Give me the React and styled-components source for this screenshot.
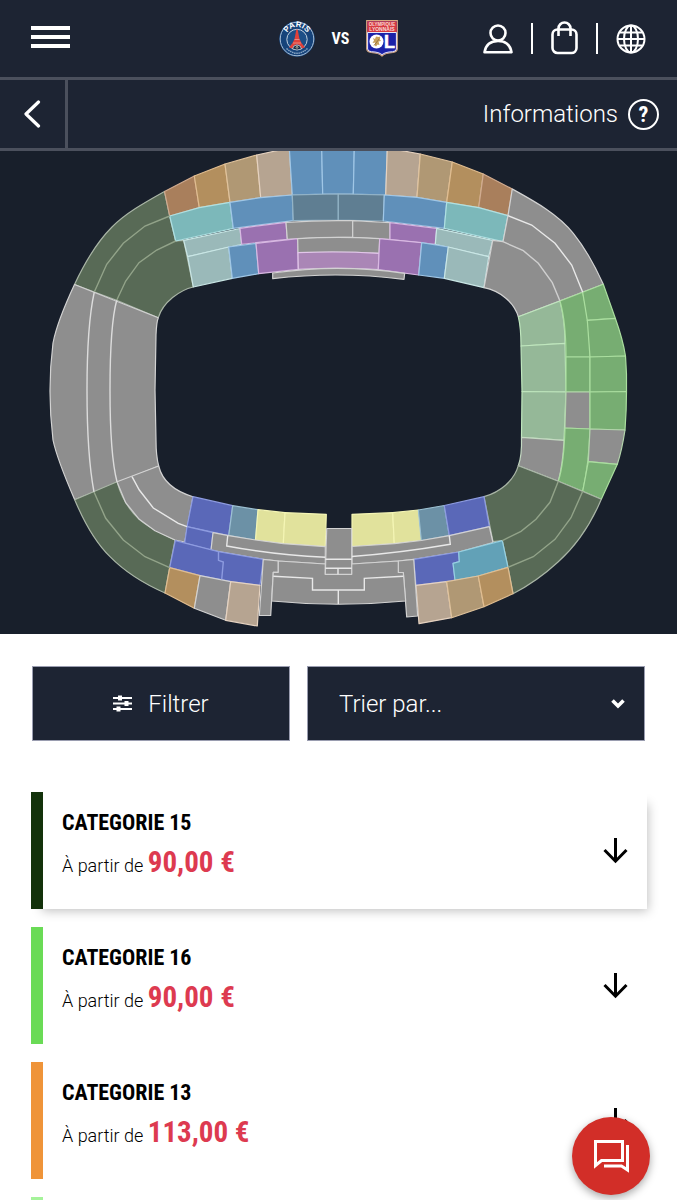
import React from 'react';
import styled, { createGlobalStyle } from 'styled-components';

const GlobalStyle = createGlobalStyle`
  *, *::before, *::after {
    box-sizing: border-box;
  }

  body {
    margin: 0;
    background: #fff;
    color: #000;
    font-family: Roboto, "Liberation Sans", sans-serif;
    font-weight: 300;
  }

  button, select {
    margin: 0;
    padding: 0;
    border: 0;
    border-radius: 0;
    background: none;
    color: inherit;
    font: inherit;
    cursor: pointer;
  }

  a {
    color: inherit;
    text-decoration: none;
  }

  svg {
    display: block;
  }
`;

const condensed = '"Roboto Condensed", "Liberation Sans Narrow", "Open Sans Condensed", sans-serif';

const TopBar = styled.header`
  display: grid;
  grid-template-columns: 1fr auto 1fr;
  align-items: center;
  height: 80px;
  padding: 0 31px;
  background: #1d2433;
  border-bottom: 3px solid #4b505d;
  color: #fff;
`;

const MenuButton = styled.button`
  display: flex;
  flex-direction: column;
  justify-content: space-between;
  width: 39px;
  height: 25px;
  padding-bottom: 3px;
`;

const MenuLine = styled.span`
  height: 4px;
  background: #fff;
`;

const Match = styled.div`
  display: flex;
  align-items: center;
  gap: 17px;
`;

const Versus = styled.span`
  font-family: ${condensed};
  font-size: 16px;
  font-weight: 700;
`;

const TopActions = styled.nav`
  display: flex;
  justify-content: flex-end;
  align-items: center;
  gap: 18px;
`;

const Separator = styled.span`
  width: 2px;
  height: 31px;
  background: #fff;
`;

const InfoBar = styled.div`
  display: flex;
  justify-content: space-between;
  height: 71px;
  background: #1d2433;
  border-bottom: 3px solid #4b505d;
  color: #fff;
`;

const BackButton = styled.button`
  display: flex;
  align-items: center;
  justify-content: center;
  width: 68px;
  border-right: 3px solid #4b505d;
`;

const InfoLink = styled.a`
  display: flex;
  align-items: center;
  gap: 10px;
  padding-right: 18px;
  font-size: 24px;
`;

const InfoMark = styled.span`
  display: flex;
  align-items: center;
  justify-content: center;
  width: 31px;
  height: 31px;
  border: 2px solid #fff;
  border-radius: 50%;
  font-family: ${condensed};
  font-size: 22px;
  font-weight: 700;
`;

const MapArea = styled.section`
  background: #181f2b;

  svg {
    width: 100%;
    height: auto;
  }
`;

const Toolbar = styled.div`
  display: grid;
  grid-template-columns: 258fr 338fr;
  gap: 17px;
  padding: 32px 32px 51px;
`;

const FilterButton = styled.button`
  display: flex;
  align-items: center;
  justify-content: center;
  gap: 16px;
  height: 75px;
  background: #1d2433;
  border: 1px solid #9a9db0;
  color: #fff;
  font-size: 24px;
`;

const SortField = styled.label`
  position: relative;
  display: block;
`;

const SortSelect = styled.select`
  appearance: none;
  width: 100%;
  height: 75px;
  padding: 0 31px;
  background: #1d2433;
  border: 1px solid #9a9db0;
  color: #fff;
  font-size: 24px;
`;

const SortArrow = styled.svg`
  position: absolute;
  top: 33px;
  right: 20px;
  pointer-events: none;
`;

const List = styled.ul`
  display: flex;
  flex-direction: column;
  gap: 18px;
  margin: 0;
  padding: 0 30px 32px 31px;
  list-style: none;
`;

const Card = styled.li`
  display: flex;
  align-items: center;
  justify-content: space-between;
  min-height: 117px;
  padding-right: 19px;
  border-left: 12px solid ${({ $color }) => $color};
  box-shadow: ${({ $raised }) => ($raised ? '6px 7px 10px -5px rgba(0, 0, 0, 0.25)' : 'none')};
`;

const CardText = styled.div`
  padding: 0 0 9px 19px;
`;

const CardTitle = styled.h2`
  margin: 0;
  font-family: ${condensed};
  font-size: 22px;
  font-weight: 700;
  line-height: 36px;
`;

const CardPrice = styled.p`
  margin: 0;
  font-size: 18px;
  line-height: 42px;
`;

const Price = styled.strong`
  color: #dd3a50;
  font-family: ${condensed};
  font-size: 29px;
  font-weight: 700;
`;

const ChatButton = styled.button`
  position: fixed;
  right: 27px;
  bottom: 5px;
  display: flex;
  align-items: center;
  justify-content: center;
  width: 78px;
  height: 78px;
  border-radius: 50%;
  background: #d22e28;
  box-shadow: 0 3px 8px rgba(0, 0, 0, 0.35);
`;

const C = {
  grey: '#8e8e8e',
  forest: '#586a56',
  brown: '#a97f5c',
  orange: '#b38f5e',
  sand: '#b09874',
  tan: '#b6a491',
  blue: '#6090ba',
  steel: '#5f7e92',
  aqua: '#7cb8ba',
  pale: '#9ab9b9',
  purple: '#9a71b0',
  mauve: '#aa86b6',
  indigo: '#5a68b8',
  slate: '#6c91a6',
  yellow: '#e1e29c',
  lagoon: '#62a1b7',
  green: '#77ad72',
  sage: '#95b898',
};

// stand blocks: [fill, path, stroke]
const blocks = [
  // north west corner
  [C.forest, 'M74.5 284.5C86 260 98 241 112 227C126 213 144 203 164.500 191.500L169.700 216L175.700 241L183.700 240.300L193.300 287C180 290 163 302 158.300 317.700L116.700 300.300L94.300 292Z', '#a9b5a6'],
  // west side
  [C.grey, 'M74.500 284.500L158.300 317.700Q156.500 322 156 335L155 390L156 440Q156 456 158.700 466L74.700 499.700Q57 459 53 440Q47 390 53 343Q57 322 74.500 284.500Z'],
  // south west corner
  [C.forest, 'M74.700 499.700L117 481.700C122 500 130 511 139.300 519.300C149 528 162 534 175 540L169.700 567.700L165 593C142 583 124 571 110 556.700C94 541 84 522 74.700 499.700Z', '#a9b5a6'],
  [C.grey, 'M117 481.700L158.700 466Q164 488 193 496.700L184.700 542L175 540L155 530.700L139.300 519.300L125.700 502.700Z'],
  // north, upper tier
  [C.brown, 'M164.500 191.500L194.300 176L199.300 207.700L169.700 216Z', '#d0ab90'],
  [C.orange, 'M194.300 176L225 164L230 202.300L199.300 207.700Z', '#e0bd90'],
  [C.sand, 'M225 164L256.700 155L260.700 197.700L230 202.300Z', '#dfc29c'],
  [C.tan, 'M256.700 155L289.300 148L292.300 195L260.700 197.700Z', '#e5d2c0'],
  [C.blue, 'M289.300 148H321.700L322.700 194L292.300 195Z', '#9fc6e6'],
  [C.blue, 'M321.700 148H354.300L353.300 194L322.700 194Z', '#9fc6e6'],
  [C.blue, 'M354.300 148H387.300L385.700 195L353.300 194Z', '#9fc6e6'],
  [C.tan, 'M387.300 148L420.300 154L417 197.300L385.700 195Z', '#e5d2c0'],
  [C.sand, 'M420.300 154L452.300 162L446.700 202.300L417 197.300Z', '#dfc29c'],
  [C.orange, 'M452.300 162L483.300 174L478.700 207.700L446.700 202.300Z', '#e0bd90'],
  [C.brown, 'M483.300 174L512.300 189L508 215.700L478.700 207.700Z', '#d0ab90'],
  // north, middle tier
  [C.aqua, 'M169.700 216L199.300 207.700L230 202.300L233.300 228.300L175.700 241Z', '#aee0e2'],
  [C.blue, 'M230 202.300L260.700 197.700L292.300 195L293.300 220.700L233.300 228.300Z', '#9fc6e6'],
  [C.steel, 'M292.300 195L338.300 194V220L293.300 220.700Z', '#93b3c6'],
  [C.steel, 'M338.300 194L384.300 195L383.300 221L338.300 220Z', '#93b3c6'],
  [C.blue, 'M384.300 195L417 197.300L446.700 202.300L444.300 228.300L383.300 221Z', '#9fc6e6'],
  [C.aqua, 'M446.700 202.300L478.700 207.700L508 215.700L503 241.700L444.300 228.300Z', '#aee0e2'],
  // north, boxes
  [C.pale, 'M183.700 240.300L240 228.500L241.700 244.300L187.700 256.700Z', '#c9e6e5'],
  [C.purple, 'M240 228.300L286 222.300L287.300 239.300L241.700 244.300Z', '#d8b8e2'],
  [C.grey, 'M286 222.300Q320 220 352.700 220.700V237.300Q320 237 287.300 239.300Z'],
  [C.grey, 'M352.700 220.700L390 222.700V239.700L352.700 237.300Z'],
  [C.purple, 'M390 222.700L436.700 228.300L435.300 244.300L390 239.700Z', '#d8b8e2'],
  [C.pale, 'M436.700 228.300L492.700 240.300L488.700 256.700L435.300 244.300Z', '#c9e6e5'],
  // north, lower tier
  [C.pale, 'M187.700 256.700L228.700 247L232.300 278.300L193.300 287Z', '#c9e6e5'],
  [C.blue, 'M228.700 247L256 243.300L258.700 273.700L232.300 278.300Z', '#9fc6e6'],
  [C.purple, 'M256 243.300L297.700 238.700L298.300 269.300L258.700 273.700Z', '#d8b8e2'],
  [C.grey, 'M297.700 238.700Q338 236 379.700 238.700L379 253.300Q338 251 298 252.700Z'],
  [C.mauve, 'M298 252.700Q338 251 379 253.300L378.300 269.700Q338 267 298.300 269.300Z', '#e2c6ea'],
  [C.purple, 'M379.700 238.700L421.700 242.700L418.700 275L378.300 269.700Z', '#d8b8e2'],
  [C.blue, 'M421.700 242.700L448.300 247L444.300 278.300L418.700 275Z', '#9fc6e6'],
  [C.pale, 'M448.300 247L488.700 256.700L484 287.700L444.300 278.300Z', '#c9e6e5'],
  [C.grey, 'M272.700 273Q338 263.500 404.700 273.300L404 279.300Q338 271 272.700 278.700Z'],
  // north east corner
  [C.grey, 'M512.300 189C534 201 558 214 573.300 233.300C586 249 595 266 603.300 284.300L518.300 316.700C514 302 500 291 484 287.700L492.700 240.300L503 241.700L508 215.700Z'],
  // east side
  [C.sage, 'M518.300 316.700L560 301Q565 320 565 343.300L521 346Q521 328 518.300 316.700Z', '#bfe6bd'],
  [C.sage, 'M521 346L565 343.300L566 392L522 391.500Z', '#bfe6bd'],
  [C.sage, 'M522 391.500L566 392L564 440.300L521.500 437.300Z', '#bfe6bd'],
  [C.grey, 'M521.500 437.300L564 440.300Q563 464 558.300 481.300L518.300 465.700Q522 456 521.500 437.300Z', '#c4d9c2'],
  [C.green, 'M560 301L582.700 292.300Q590 322 590 357H566Q566 322 560 301Z', '#aade9f'],
  [C.green, 'M566 357H590V392H566Z', '#aade9f'],
  [C.grey, 'M566 392H590V429L565 428Z', '#b3d5ac'],
  [C.green, 'M565 428L590 429Q589 464 582.700 491.300L558.300 481.300Q564 464 565 428Z', '#aade9f'],
  [C.green, 'M582.700 292.300L603.300 284.300L615.300 318.300L587.300 320.300Z', '#aade9f'],
  [C.green, 'M587.300 320.300L615.300 318.300Q623 340 625.500 356L590 357Z', '#aade9f'],
  [C.green, 'M590 357L625.500 356Q627 375 626.500 391.500L590 392Z', '#aade9f'],
  [C.green, 'M590 392L626.500 391.500Q626.500 410 625 430L590 429Z', '#aade9f'],
  [C.grey, 'M590 429L625 430Q622 450 617.300 464.300L588.300 461.700Z', '#b3d5ac'],
  [C.green, 'M588.300 461.700L617.300 464.300L601.300 499.300L582.700 491.300Z', '#aade9f'],
  // south east corner
  [C.forest, 'M518.300 465.700L558.300 481.300L601.300 499.300C590 526 576 546 558 562C545 574 530 585 513 593.700L508 567.300L502.300 540.700L493 541.700L484 496.700C500 492 514 481 518.300 465.700Z', '#a9b5a6'],
  // south, lower tier
  [C.indigo, 'M193 496.700L232.700 505.700L228.700 535.700L187 526.700Z', '#8d9be0'],
  [C.indigo, 'M187 526.700L213 532.700L211 550L184.700 543Z', '#8d9be0'],
  [C.slate, 'M232.700 505.700L258 509.700L255.500 540L228.700 535.700Z', '#9cc0d2'],
  [C.yellow, 'M258 509.700L285 512.700L283.300 543.700L255.500 540Z', '#f4f5b4'],
  [C.yellow, 'M285 512.700L326.300 514.300L325.300 546.700L283.300 543.700Z', '#f4f5b4'],
  [C.yellow, 'M352 514.300L392.700 512.700L394.300 543.700L352 546.500Z', '#f4f5b4'],
  [C.yellow, 'M392.700 512.700L418.300 510L421.300 540.500L394.300 543.700Z', '#f4f5b4'],
  [C.slate, 'M418.300 510L444.300 505.500L449.300 535.700L421.300 540.500Z', '#9cc0d2'],
  [C.indigo, 'M444.300 505.500L484 496.700L489.300 526.700L449.300 535.700Z', '#8d9be0'],
  [C.grey, 'M213 532.700L228.700 535.700L255.500 540L283.300 543.700L325.300 546.700V564L278 561L263.300 559.300L218.500 551.700L211 550Z'],
  [C.grey, 'M352 546.500L394.300 543.700L421.300 540.500L449.300 535.700L489.300 526.700L493 542.500L458.700 552L413.700 559.300L398.300 561L352 564Z'],
  // south, middle tier
  [C.indigo, 'M175.300 540.700L218.500 551.700L263.300 559.300L260 585.300L230.700 581.700L200 575.700L169.700 567.700Z', '#8d9be0'],
  [C.indigo, 'M413.700 559.300L458.700 552L459.300 561.700L453 563.300L455 580.300L416 585.300Z', '#8d9be0'],
  [C.lagoon, 'M458.700 552L502.300 540.700L508 567.300L478.300 576L455 580.300L453 563.300L459.300 561.700Z', '#96d1e2'],
  // south, upper tier
  [C.orange, 'M169.700 567.700L200 575.700L194.300 608.300L165 593Z', '#e0bd90'],
  [C.grey, 'M200 575.700L230.700 581.700L225.700 620.300L194.300 608.300Z'],
  [C.tan, 'M230.700 581.700L260 585.300L257.300 626L225.700 620.300Z', '#e5d2c0'],
  [C.tan, 'M416 585.300L446.700 581.700L451.700 617.700L419 623.700Z', '#e5d2c0'],
  [C.sand, 'M446.700 581.700L478.300 576L484 606.700L451.700 617.700Z', '#dfc29c'],
  [C.orange, 'M478.300 576L508 567.300L513 593.700L484 606.700Z', '#e0bd90'],
  // press area
  [C.grey, 'M263.300 559.300L278.300 561V572.300H273.300L270.700 615.500H259.300Z'],
  [C.grey, 'M398.300 561L413.700 559.300L417.700 616L406.700 617L403.300 572.500H398.300Z'],
  [C.grey, 'M278.300 561L325.300 564V574.300H351.500V564L398.300 561V572.500H403.300L405.700 601Q338 607.500 271.700 601L273.300 572.300H278.300Z'],
  [C.grey, 'M326.700 528.500H351.700V574.300H325.300Z'],
];

// aisles drawn over the stands: [stroke, path]
const aisles = [
  ['#92a389', 'M94.300 292L106.700 264.300L123.300 243.300L145 226L169.700 216'],
  ['#92a389', 'M116.700 300.300L125.700 281L139 262.700L156.700 250L175.700 241'],
  ['#dcdcdc', 'M94.300 292Q87 325 87 390T94 492'],
  ['#dcdcdc', 'M116.700 300.300Q110 325 110 390T117 481.700'],
  ['#92a389', 'M94 492L105.700 518.300L123.300 540L145 556.700L169.700 567.700'],
  ['#e8e8e8', 'M132 476.700L139.300 490L153.300 508L178.300 523.300L187 526.700'],
  ['#e8e8e8', 'M508 215.700L531.700 225L555 243.300L571.700 265L582.700 292.300'],
  ['#cfcfcf', 'M503 241.700L523.300 250.700L538.300 263.300L552.300 282.700L560 301'],
  ['#92a389', 'M558.300 481.300L550 502.300L536 519.300L521 531.300L502.300 540.700'],
  ['#92a389', 'M582.700 491.300L571 517.700L555 539.300L533.300 556.700L508 567.300'],
  ['#8d9be0', 'M218.500 552V560.300L223.300 562L221.700 579.500'],
  ['#e8e8e8', 'M325.300 557.300Q275 555 226.700 546L227.700 535.700'],
  ['#e8e8e8', 'M352 556.500Q400 553 450.300 544.300L449.300 535.700'],
  ['#e8e8e8', 'M273.300 576.300L312.500 578.300V590H364.300V578.300L403.300 576.300M338.300 590V604'],
  ['#e8e8e8', 'M325.300 559.300H351.700M325.300 568.300H351.700M338 568.300V574.300'],
];

function StadiumMap() {
  return (
    <svg viewBox="0 151 677 483" role="img" aria-label="Plan du stade">
      <g strokeWidth="1.2" strokeLinejoin="round">
        {blocks.map(([fill, d, stroke = '#d2d2d2']) => (
          <path key={d} d={d} fill={fill} stroke={stroke} />
        ))}
      </g>
      <g fill="none" strokeWidth="1.4">
        {aisles.map(([stroke, d]) => (
          <path key={d} d={d} stroke={stroke} />
        ))}
      </g>
    </svg>
  );
}

function ParisLogo() {
  return (
    <svg width="36" height="36" viewBox="0 0 36 36" role="img" aria-label="Paris Saint-Germain">
      <circle cx="18" cy="18" r="17.800" fill="#16437a" />
      <circle cx="18" cy="18" r="16.800" fill="none" stroke="#a9bfd6" strokeWidth="1" />
      <circle cx="18" cy="18.500" r="10.200" fill="#1d4f87" stroke="#c3d1e0" strokeWidth="1" />
      <path id="paris-arc" d="M7 17A11 11 0 0 1 29 17" fill="none" />
      <text fill="#fff" fontFamily="Liberation Sans, sans-serif" fontSize="8" fontWeight="700" textAnchor="middle">
        <textPath href="#paris-arc" startOffset="50%">PARIS</textPath>
      </text>
      <path d="M17.300 8.500H18.700L19.700 14L20.500 18L22.500 22L26 26.500L22.500 27.500Q21.500 23.500 18 23.500T13.500 27.500L10 26.500L13.500 22L15.500 18L16.300 14Z" fill="#e0413a" />
      <path d="M15.500 18.500H20.500M14 22H22" stroke="#f2b5ac" strokeWidth="0.600" />
      <path d="M13.500 28Q14 24 18 24T22.500 28Q18 30 13.500 28Z" fill="#172a47" stroke="#dce3e8" strokeWidth="0.700" />
      <path d="M18 24.500V28M16.500 26.500L18 25.500L19.500 26.500" fill="none" stroke="#c8c3a0" strokeWidth="0.800" />
      <path d="M7.500 27.500Q18 37 28.500 27.500" fill="none" stroke="#8aa6c4" strokeWidth="1.500" strokeDasharray="1.500 0.700" />
    </svg>
  );
}

function LyonLogo() {
  return (
    <svg width="32" height="37" viewBox="0 0 32 37" role="img" aria-label="Olympique Lyonnais">
      <path d="M0.700 0.700H31.300V29Q31 32 27 32.500Q19 33 16 36Q13 33 5 32.500Q1 32 0.700 29Z" fill="#1c22a8" stroke="#d9a97f" strokeWidth="1.200" />
      <path d="M1.300 1.300H30.700V12H1.300Z" fill="#d73a41" />
      <path d="M1.600 12.500H30.400V29Q30 31.500 26.500 31.700Q19 32 16 34.700Q13 32 5.500 31.700Q2 31.500 1.600 29Z" fill="none" stroke="#fff" strokeWidth="0.900" />
      <g fill="#f8d9d4" fontFamily="Liberation Sans, sans-serif" fontWeight="700" textAnchor="middle">
        <text x="16" y="6" fontSize="4.500">OLYMPIQUE</text>
        <text x="16" y="11.300" fontSize="5">LYONNAIS</text>
      </g>
      <circle cx="10.500" cy="21.500" r="7" fill="#fff" />
      <path d="M7 18L9 19L10 16.500L12.500 17L14.500 16.500L13.500 19L15 21L12.500 21.500L13.500 25L11.500 24.500L10 26.500L8.500 25L9.500 22.500L6.500 23L8 20.500Z" fill="#c9a15a" />
      <path d="M8 25.500L13.500 18.500" stroke="#8f6a33" strokeWidth="0.800" />
      <text x="18" y="28.200" fill="#fff" stroke="#fff" strokeWidth="0.600" fontFamily="Liberation Sans, sans-serif" fontSize="18" fontWeight="700">L</text>
    </svg>
  );
}

function UserIcon() {
  return (
    <svg width="30" height="30" viewBox="0 0 30 30" fill="none" stroke="#fff" strokeWidth="2.600">
      <circle cx="15" cy="9" r="7.500" />
      <path d="M1.500 28.200Q3.500 17 15 17T28.500 28.200Z" strokeLinejoin="round" />
    </svg>
  );
}

function BagIcon() {
  return (
    <svg width="27" height="36" viewBox="0 0 27 36" fill="none" stroke="#fff" strokeWidth="2.600">
      <rect x="1.500" y="8.500" width="24" height="23.500" rx="5" />
      <path d="M7.500 15V7.500A6 6 0 0 1 19.500 7.500V15" />
    </svg>
  );
}

function GlobeIcon() {
  return (
    <svg width="30" height="30" viewBox="0 0 30 30" fill="none" stroke="#fff" strokeWidth="2">
      <circle cx="15" cy="15" r="13.500" />
      <ellipse cx="15" cy="15" rx="7" ry="13.500" />
      <path d="M15 1.500V28.500M1.500 15H28.500M4 8.500H26M4 21.500H26" />
    </svg>
  );
}

function ArrowDown() {
  return (
    <svg width="25" height="27" viewBox="0 0 25 27" fill="none" stroke="#000" strokeWidth="3">
      <path d="M12.500 1V24.500M1.500 13L12.500 24.200L23.500 13" />
    </svg>
  );
}

const categories = [
  { id: 15, title: 'CATEGORIE 15', price: '90,00 €', color: '#13320b', raised: true },
  { id: 16, title: 'CATEGORIE 16', price: '90,00 €', color: '#6adb56' },
  { id: 13, title: 'CATEGORIE 13', price: '113,00 €', color: '#ef9439' },
  { id: 17, color: '#a5f39a' },
];

export default function App() {
  return (
    <>
      <GlobalStyle />
      <TopBar>
        <MenuButton aria-label="Menu">
          <MenuLine />
          <MenuLine />
          <MenuLine />
        </MenuButton>
        <Match>
          <ParisLogo />
          <Versus>VS</Versus>
          <LyonLogo />
        </Match>
        <TopActions>
          <a href="#compte" aria-label="Mon compte"><UserIcon /></a>
          <Separator />
          <a href="#panier" aria-label="Panier"><BagIcon /></a>
          <Separator />
          <a href="#langue" aria-label="Langue"><GlobeIcon /></a>
        </TopActions>
      </TopBar>
      <InfoBar>
        <BackButton aria-label="Retour">
          <svg width="18" height="28" viewBox="0 0 18 28" fill="none" stroke="#fff" strokeWidth="3.200" strokeLinecap="round" strokeLinejoin="round">
            <path d="M14.500 2L2 14L14.500 26" />
          </svg>
        </BackButton>
        <InfoLink href="#informations">
          Informations
          <InfoMark>?</InfoMark>
        </InfoLink>
      </InfoBar>
      <MapArea>
        <StadiumMap />
      </MapArea>
      <Toolbar>
        <FilterButton>
          <svg width="19" height="17" viewBox="0 0 19 17" stroke="#fff" strokeWidth="2">
            <path d="M0 3H19M0 8.500H19M0 14H19" />
            <path d="M7 0.500V5.500M13.500 6V11M5.500 11.500V16.500" strokeWidth="4" />
          </svg>
          Filtrer
        </FilterButton>
        <SortField>
          <SortSelect aria-label="Trier par" defaultValue="">
            <option value="">Trier par...</option>
          </SortSelect>
          <SortArrow width="14" height="10" viewBox="0 0 14 10" fill="none" stroke="#fff" strokeWidth="3.600">
            <path d="M1.500 1.500L7 7L12.500 1.500" />
          </SortArrow>
        </SortField>
      </Toolbar>
      <List>
        {categories.map(({ id, title, price, color, raised }) => (
          <Card key={id} $color={color} $raised={raised}>
            {title && (
              <>
                <CardText>
                  <CardTitle>{title}</CardTitle>
                  <CardPrice>
                    À partir de <Price>{price}</Price>
                  </CardPrice>
                </CardText>
                <button type="button" aria-label={`Voir ${title}`}><ArrowDown /></button>
              </>
            )}
          </Card>
        ))}
      </List>
      <ChatButton aria-label="Chat">
        <svg width="36" height="34" viewBox="0 0 36 34" fill="none" stroke="#fff" strokeWidth="3">
          <path d="M2.500 2.500H29.500V21.500H8.500L2.500 26.500Z" />
          <path d="M34.500 6V31L28.500 27H11" />
        </svg>
      </ChatButton>
    </>
  );
}
